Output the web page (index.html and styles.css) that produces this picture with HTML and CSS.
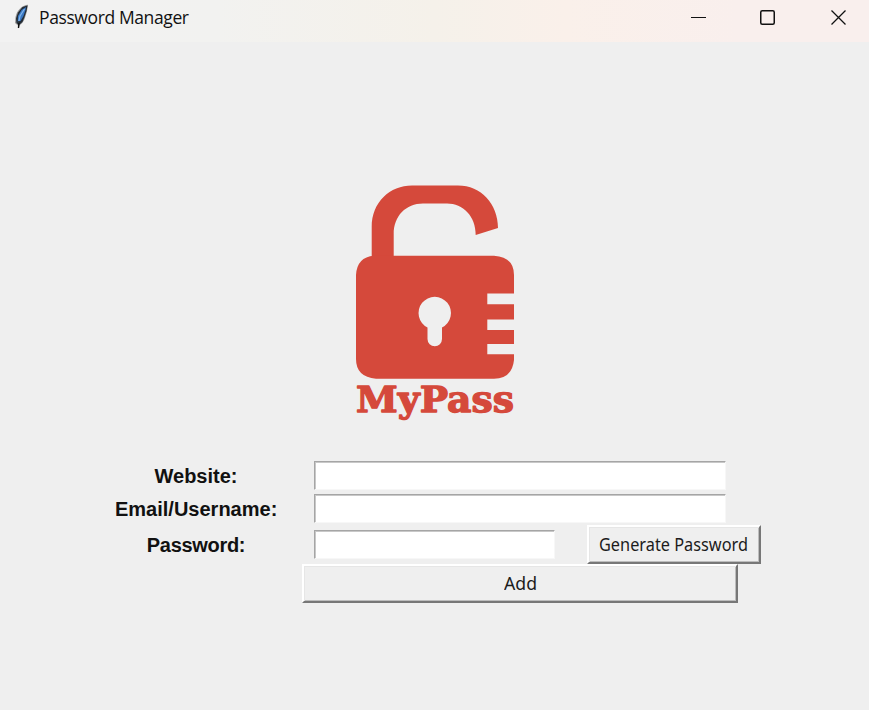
FILE: index.html
```html
<!DOCTYPE html>
<html lang="en">
<head>
<meta charset="utf-8">
<title>Password Manager</title>
<link rel="stylesheet" href="styles.css">
</head>
<body>
<header class="titlebar">
  <svg class="feather" width="18" height="26" viewBox="0 0 18 26">
    <path d="M15 .8C9 1 3.500 7 2.500 13L2 19L5 21.500L5.200 24.500L7.500 20.500C11.500 18 12.500 12 14 7Z" fill="#9a9a9a"/>
    <path d="M14.500 1.500L9.500 3L5 8.500L3 14.500L3.500 19L6 21L9.500 18L11.500 13L13.500 7Z" fill="#222b35"/>
    <path d="M13 3L8.500 6L5 12L4.800 18L7.500 17L10.500 12L12.500 6Z" fill="#3978c4"/>
    <path d="M11.500 5L7 12L5.500 19" fill="none" stroke="#80b6ed" stroke-width="1.200"/>
    <path d="M6 17L5.500 24" stroke="#111" stroke-width="1.400"/>
  </svg>
  <svg class="caption" width="160" height="26"><text class="title" x="0" y="20" textLength="150">Password Manager</text></svg>
  <div class="controls">
    <svg width="15" height="15"><path d="M0 7.500H15" stroke="#111" stroke-width="1"/></svg>
    <svg width="15" height="15"><rect x=".75" y=".75" width="13.500" height="13.500" rx="1.500" fill="none" stroke="#111" stroke-width="1.500"/></svg>
    <svg width="15" height="15"><path d="M.5 .5L14.500 14.500M14.500 .5L.5 14.500" stroke="#111" stroke-width="1.300"/></svg>
  </div>
</header>
<main class="window">
  <svg class="logo" width="170" height="245" viewBox="350 180 170 245">
    <g fill="#d5493b">
      <path d="M371.700 260V227C371.700 202 390 185.500 412 185.500H458C481 185.500 498 204 498 228L475.700 235C475.700 216 463 203.500 447 203.500H423C406 203.500 393.700 216 393.700 234V260Z"/>
      <path d="M374 255.700H494Q514 257 514 275V293.500H487.300V304.300H514V319.500H487.300V330H514V344H487.300V354.300H514V360Q512 378.700 494 378.700H376Q356 377 356 359V275Q357 257 374 255.700Z"/>
    </g>
    <path d="M427.500 327.500A16.200 16.200 0 1 1 442 327.500V339A7.200 7.200 0 0 1 427.500 339Z" fill="#efefef"/>
    <text class="brand" x="356" y="412" textLength="158" lengthAdjust="spacingAndGlyphs">MyPass</text>
  </svg>
  <form class="form">
    <label class="label" for="website">Website:</label>
    <input class="entry" id="website" type="text">
    <label class="label" for="email">Email/Username:</label>
    <input class="entry" id="email" type="text">
    <label class="label" for="password">Password:</label>
    <div class="password-row">
      <input class="entry short" id="password" type="text">
      <button class="button generate" type="button"><svg width="156" height="24"><text class="button-text" x="3" y="17.500" textLength="149" lengthAdjust="spacingAndGlyphs">Generate Password</text></svg></button>
    </div>
    <button class="button add" type="button"><svg width="33" height="24"><text class="button-text" x="0" y="17.500" textLength="33" lengthAdjust="spacingAndGlyphs">Add</text></svg></button>
  </form>
</main>
</body>
</html>
```
FILE: styles.css
```css
* { box-sizing: border-box; }
body {
  margin: 0;
  height: 710px;
  overflow: hidden;
  background: #efefef;
}
svg { display: block; }
.titlebar {
  display: flex;
  height: 42px;
  padding: 4px 23px 0 13px;
  background: linear-gradient(90deg, #f2f2f2 0%, #f2f2f0 25%, #f5f1ea 50%, #faf0ea 65%, #f9efed 85%, #f9efed 100%);
}
.caption { margin-left: 8px; }
.title {
  font: 17.500px "Open Sans", "Noto Sans", sans-serif;
  fill: #111;
}
.controls {
  display: flex;
  gap: 56px;
  margin: 6px 0 0 auto;
}
.controls svg:first-child { margin-right: -2px; }
.window { padding-top: 138px; }
.logo { margin: 0 auto 36px 350px; }
.brand {
  font: bold 35.500px "DejaVu Serif", serif;
  fill: #d5493b;
  stroke: #d5493b;
  stroke-width: 1.300px;
  stroke-linejoin: round;
}
.form {
  display: grid;
  grid-template-columns: 162px auto;
  grid-template-rows: 29px 29px 39px 39px;
  column-gap: 37px;
  row-gap: 4px;
  width: 646px;
  margin-left: 115px;
}
.label {
  align-self: center;
  text-align: center;
  white-space: nowrap;
  font: bold 20px/24px "Liberation Sans", sans-serif;
  color: #111;
}
.label[for="password"] {
  margin-top: -4px;
  letter-spacing: -.3px;
}
.entry {
  width: 412px;
  height: 29px;
  padding: 0 3px;
  border: 1px solid;
  border-color: #a5a5a5 #f7f7f7 #f7f7f7 #a5a5a5;
  border-radius: 0;
  background: #fff;
  box-shadow: inset 1px 1px #c8c8c8;
  font: 18px "Open Sans", sans-serif;
  outline: 0;
}
.password-row {
  display: flex;
  align-items: center;
  justify-content: space-between;
  margin: -2px 0 2px;
}
.short { width: 241px; }
.button {
  display: flex;
  align-items: center;
  justify-content: center;
  height: 39px;
  padding: 0;
  border: 2px solid;
  border-color: #fff #777 #777 #fff;
  background: #efefef;
  box-shadow: inset 1px 1px #e6e6e6, inset -1px -1px #bdbdbd;
}
.generate { width: 174px; }
.add {
  grid-column: 2;
  width: 436px;
  margin: -6px 0 0 -12px;
}
.button-text {
  font: 18px "Noto Sans", sans-serif;
  fill: #1c1c1c;
}
```
